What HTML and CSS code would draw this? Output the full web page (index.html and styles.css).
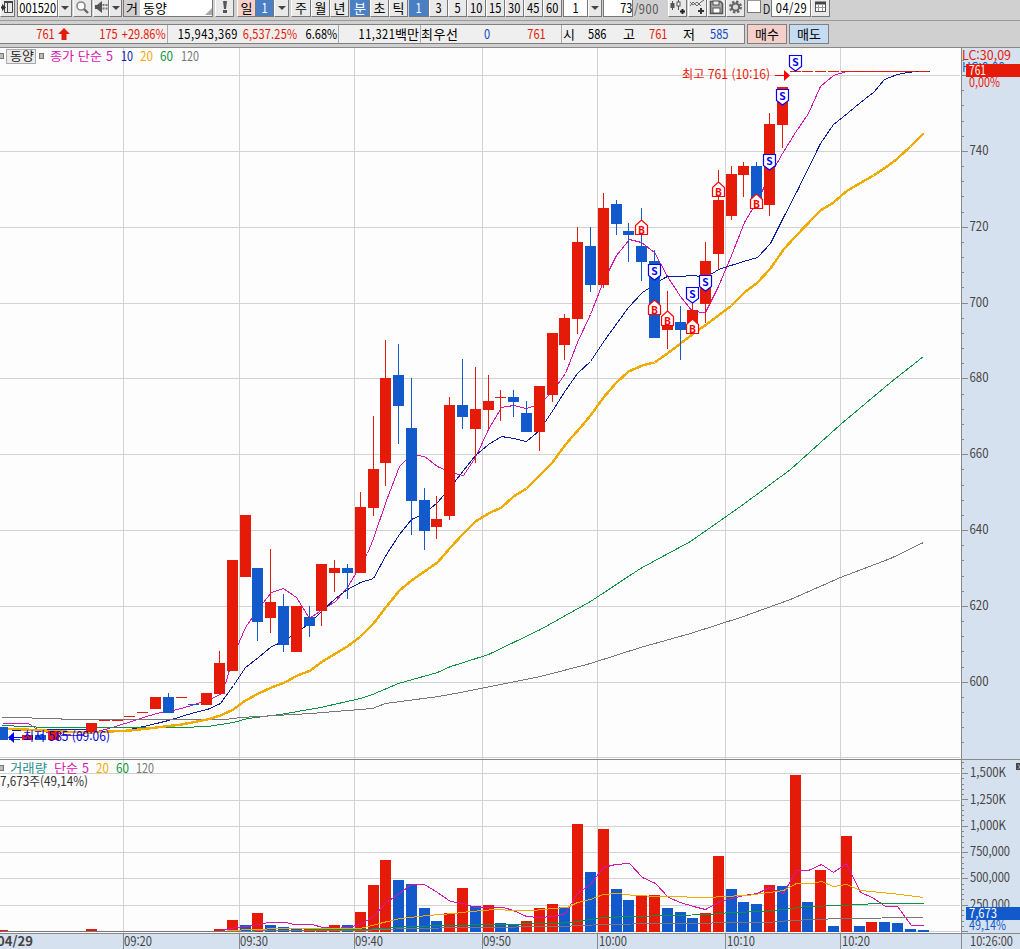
FILE: index.html
```html
<!DOCTYPE html>
<html lang="ko">
<head>
<meta charset="utf-8">
<title>동양 001520</title>
<link rel="stylesheet" href="styles.css">
</head>
<body>
<div class="app">
  <div class="toolbar">
    <div class="c btn w15"><svg width="13" height="16"><path d="M3.500 3v9.500h8v-11h-8M6.500 3v9" fill="none" stroke="#444"/><path d="M3 2h9" stroke="#444" stroke-width="2"/><path d="M-1 7.500h4" stroke="#333" stroke-width="2"/><path d="M1 4l4 3.500-4 3.500z" fill="#333"/></svg></div>
    <div class="c inp w41 m2"><b class="n">001520</b></div>
    <div class="c btn w14"><i class="dd"></i></div>
    <div class="c btn w19 m1"><svg width="17" height="16"><circle cx="7" cy="6" r="4" fill="#fff" stroke="#888" stroke-width="1.600"/><path d="M10 9l4 4" stroke="#666" stroke-width="2.400"/></svg></div>
    <div class="c btn w16 m1"><svg width="14" height="16"><path d="M1 5h2l5-4v12l-5-4h-2z" fill="#555"/><path d="M9.500 4v7M12.500 4v7" stroke="#777" stroke-width="2" stroke-dasharray="2 1.500"/></svg></div>
    <div class="c btn w13"><i class="dd"></i></div>
    <div class="c inp w90 m1 left"><span class="k tag">거</span><span class="k">동양</span><i class="corner"></i></div>
    <div class="c btn w19 m2"><svg width="17" height="16"><path d="M7 1h4l-1 8h-2z" fill="#555"/><rect x="7" y="10" width="4" height="3" fill="#555"/></svg></div>
    <div class="c btn pink w19 m3"><span class="k">일</span></div>
    <div class="c btn on w18"><b class="n">1</b></div>
    <div class="c btn w15"><i class="dd"></i></div>
    <div class="c btn w20 m2"><span class="k">주</span></div>
    <div class="c btn w19"><span class="k">월</span></div>
    <div class="c btn w19"><span class="k">년</span></div>
    <div class="c btn on w20 m1"><span class="k">분</span></div>
    <div class="c btn w19"><span class="k">초</span></div>
    <div class="c btn w19"><span class="k">틱</span></div>
    <div class="c btn on w20 m1"><b class="n">1</b></div>
    <div class="c btn w19"><b class="n">3</b></div>
    <div class="c btn w19"><b class="n">5</b></div>
    <div class="c btn w19"><b class="n">10</b></div>
    <div class="c btn w19"><b class="n">15</b></div>
    <div class="c btn w19"><b class="n">30</b></div>
    <div class="c btn w19"><b class="n">45</b></div>
    <div class="c btn w19"><b class="n">60</b></div>
    <div class="c inp w25 m1"><b class="n">1</b></div>
    <div class="c btn w14"><i class="dd"></i></div>
    <div class="c inp w30 m1 right"><b class="n">73</b></div>
    <div class="c flat w25 m1 left"><b class="n t">/900</b></div>
    <div class="c btn w19 m9"><svg width="17" height="16"><path d="M3.500 1v9M9.500 0v10" stroke="#555"/><rect x="1.500" y="3" width="4" height="5" fill="#555"/><rect x="8" y="2" width="3" height="4" fill="#fff" stroke="#555"/><path d="M13.500 9v5M11 11.500h5" stroke="#222" stroke-width="2"/></svg></div>
    <div class="c btn w19 m1"><svg width="17" height="16"><path d="M1 6l3-4 4 4 4-4 3-2M1 2l3 3 4-3 4 4" fill="none" stroke="#666"/><path d="M12 8v6M9 11h6" stroke="#333" stroke-width="2"/></svg></div>
    <div class="c btn w19"><svg width="17" height="16"><path d="M2.500 1.500h10l2 2v10h-12z" fill="#aaa" stroke="#555" stroke-width="1.500"/><rect x="5" y="1" width="6" height="4" fill="#eee" stroke="#555"/><rect x="5" y="8" width="7" height="5" fill="#fff" stroke="#555"/></svg></div>
    <div class="c btn w19"><svg width="17" height="16"><circle cx="8.500" cy="7" r="5.200" fill="none" stroke="#666" stroke-width="2.600" stroke-dasharray="2.300 1.780"/><circle cx="8.500" cy="7" r="3.600" fill="#ddd" stroke="#666" stroke-width="2"/></svg></div>
    <div class="c check m2"></div>
    <div class="c flat w9 m1"><b class="n dark">D</b></div>
    <div class="c inp w40"><b class="n t">04/29</b></div>
    <div class="c btn w19"><svg width="17" height="16"><rect x="3.500" y="2.500" width="10" height="9" fill="#fff" stroke="#555"/><path d="M3 3h11" stroke="#444" stroke-width="3"/><path d="M4 7.500h9M6.500 5v6M10.500 5v6" stroke="#999"/></svg></div>
  </div>
  <div class="quote">
    <div class="panel">
      <div class="q red w55 right"><b class="n">761</b></div>
      <div class="q w17"><svg width="12" height="12"><path d="M6 0l6 6h-3.500v6h-5v-6h-3.500z" fill="#e61a08"/></svg></div>
      <div class="q red w46 right"><b class="n">175</b></div>
      <div class="q red w50 right sep"><b class="n">+29.86%</b></div>
      <div class="q w70 right"><b class="n t">15,943,369</b></div>
      <div class="q red w59 right"><b class="n t2">6,537.25%</b></div>
      <div class="q w42 right sep"><b class="n">6.68%</b></div>
      <div class="q w82 right sep"><b class="n t">11,321</b><span class="k">백만</span></div>
      <div class="q w40 left"><span class="k wide">최우선</span></div>
      <div class="q blue w29 right"><b class="n">0</b></div>
      <div class="q red w71 right padr"><b class="n">761</b></div>
      <div class="q w27 left sepl"><span class="k">시</span></div>
      <div class="q w35 left"><b class="n">586</b></div>
      <div class="q w26 left"><span class="k">고</span></div>
      <div class="q red w34 left"><b class="n">761</b></div>
      <div class="q w27 left"><span class="k">저</span></div>
      <div class="q blue w34 left"><b class="n">585</b></div>
    </div>
    <div class="act buy"><span class="k">매수</span></div>
    <div class="act sell"><span class="k">매도</span></div>
  </div>
  <svg id="chart" class="chart" width="1020" height="902" viewBox="0 47 1020 902"></svg>
</div>
<script src="chart.js"></script>
</body>
</html>
```
FILE: styles.css
```css
* { box-sizing: border-box; }
body { margin: 0; background: #d0d0d0; font-family: "Noto Sans CJK KR", sans-serif; overflow: hidden; }
.app { width: 1020px; height: 949px; display: flex; flex-direction: column; overflow: hidden; }
.toolbar { display: flex; height: 21px; flex: none; border-bottom: 1px solid #999; }
.c { height: 17px; flex: none; display: flex; align-items: center; justify-content: center; border-right: 1px solid #777; border-bottom: 1px solid #777; font-size: 13px; color: #000; line-height: 15px; padding-bottom: 1px; }
.c svg { display: block; flex: none; }
.btn { background: #e9e9e9; border-left: 1px solid #fff; }
.inp { background: #fff; border-left: 1px solid #777; }
.flat { border: 0; color: #555; }
.pink { background: #f6d0cb; }
.on { background: #4a7fc4; border-left-color: #4a7fc4; color: #fff; }
.check { width: 14px; height: 13px; background: #fff; border: 1px solid #777; border-top-color: #999; }
.n { font-weight: 400; display: inline-block; white-space: nowrap; transform: scaleX(.85); flex: none; }
.t { letter-spacing: .6px; }
.t2 { letter-spacing: .2px; }
.dark { color: #222; }
.k { white-space: nowrap; flex: none; }
.wide { letter-spacing: .5px; }
.left { justify-content: flex-start; }
.left .n { transform-origin: left; }
.right { justify-content: flex-end; }
.right .n { transform-origin: right; }
.tag { background: #d0d0d0; width: 16px; text-align: center; margin-right: 3px; height: 16px; }
.corner { margin-left: auto; align-self: flex-end; border-left: 7px solid transparent; border-bottom: 7px solid #aaa; }
.dd { border: 4px solid transparent; border-top: 4px solid #444; border-bottom: 0; }
.m1 { margin-left: 1px; } .m2 { margin-left: 2px; } .m3 { margin-left: 3px; } .m9 { margin-left: 9px; }
.w9 { width: 9px; } .w13 { width: 13px; } .w14 { width: 14px; } .w15 { width: 15px; } .w16 { width: 16px; }
.w17 { width: 17px; } .w18 { width: 18px; } .w19 { width: 19px; } .w20 { width: 20px; } .w25 { width: 25px; }
.w26 { width: 26px; } .w27 { width: 27px; } .w29 { width: 29px; } .w30 { width: 30px; } .w34 { width: 34px; } .w35 { width: 35px; }
.w40 { width: 40px; } .w41 { width: 41px; } .w42 { width: 42px; } .w46 { width: 46px; } .w50 { width: 50px; }
.w55 { width: 55px; } .w59 { width: 59px; } .w70 { width: 70px; } .w71 { width: 71px; } .w82 { width: 82px; } .w90 { width: 90px; }
.quote { display: flex; height: 26px; flex: none; padding-top: 3px; gap: 2px; }
.panel { display: flex; width: 745px; height: 20px; background: #efefef; border: 1px solid #808080; border-left: 0; }
.q { display: flex; flex: none; align-items: center; font-size: 13px; line-height: 18px; justify-content: center; color: #000; }
.q.left { justify-content: flex-start; }
.q.right { justify-content: flex-end; }
.sep { border-right: 1px solid #aaa; padding-right: 1px; }
.sepl { border-left: 1px solid #aaa; padding-left: 1px; }
.q.padr { padding-right: 15px; }
.red { color: #e61a08; }
.blue { color: #1147c0; }
.act { width: 40px; height: 20px; border: 1px solid #808080; font-size: 13px; line-height: 17px; text-align: center; }
.buy { background: #f5d0cb; }
.sell { background: #c5dcf2; }
.chart { display: block; flex: none; font-family: "Noto Sans CJK KR", sans-serif; font-size: 12.5px; }
.crisp { shape-rendering: crispEdges; }
.mark { font-family: "DejaVu Sans Mono", monospace; font-size: 11px; font-weight: 700; text-anchor: middle; }
```
FILE: chart.js
```javascript
const RED = '#e61a08', BLUE = '#125acb', MAG = '#d614b0', NAVY = '#0a1e9e',
      GOLD = '#f0ab00', GREEN = '#0c9440', GRAY = '#777';
const out = [];
const left = k => Math.floor(227.3 + 12.792 * k);
const rect = (x, y, w, h, f) => out.push(`<rect x="${x}" y="${y}" width="${w}" height="${h}" fill="${f}"/>`);
const line = (pts, c, w = 1) => out.push(`<polyline points="${pts}" transform="translate(.5 .5)" fill="none" stroke="${c}" stroke-width="${w}"/>`);
const text = (x, y, s, c, len, extra = '') => out.push(`<text x="${x}" y="${y}" fill="${c}" ${len ? `textLength="${len}" lengthAdjust="spacingAndGlyphs"` : ''} ${extra}>${s}</text>`);

out.push('<g class="crisp">');
rect(0, 47, 1020, 902, '#fdfdfd');
rect(961, 47, 59, 902, '#d6e1ef');
rect(0, 934, 1020, 15, '#d6e1ef');
for (const y of [75, 151, 227, 303, 378, 454, 530, 606, 682, 757, 773, 800, 826, 852, 878, 905, 931]) rect(0, y, 960, 1, '#d2d2d2');
for (const x of [123, 239, 354, 482, 597, 725, 840]) {
  rect(x, 48, 1, 885, '#d2d2d2');
  rect(x, 934, 1, 15, '#888');
}

// moving averages of the closing price
line('2,723 28,723 37,729 47,732 75,735 92,732 105,729 118,725 131,721 143,717 156,713 168,711 181,708 194,704 207,700 220,694 226,680 233,655 245,627 258,608 271,592 283,588 296,597 309,618 322,609 335,601 347,587 360,565 367,553 373,538 386,500 399,466 411,454 424,456 437,466 450,472 463,475 475,457 488,429 501,407 513,405 526,408 539,404 552,391 565,373 577,342 590,314 603,281 616,255 629,239 641,242 654,252 667,276 680,296 692,311 705,312 718,286 731,255 744,222 757,200 769,176 782,153 795,132 808,113 820,86 833,75 846,71 929,71', MAG);
line('2,729 20,730 48,729 85,729 95,731 120,731 143,726 156,723 168,720 181,716 194,712 207,709 220,703 233,685 245,667 258,657 271,646 283,641 296,632 309,623 322,610 335,598 347,589 360,582 373,578 386,554 399,534 411,519 424,513 437,502 450,487 463,470 475,455 488,444 501,436 513,438 526,441 539,430 553,409 565,390 577,373 590,361 604,340 628,307 642,292 648,288 663,278 667,276 680,276 692,275 700,276 712,273 718,269 743,261 757,257 770,243 783,217 797,190 820,143 833,124 842,117 860,102 873,92 884,79 897,74 907,72 917,71 929,71', NAVY);
line('2,725 47,727 180,727 207,726 220,724 233,722 247,718 280,714 320,707 360,698 372,694 398,683 437,672 450,666 460,663 488,654 540,629 590,601 640,568 690,541 740,506 790,469 840,424 890,382 923,356', GREEN);
line('2,717 60,718 62,719 225,719 240,717 310,713 372,708 385,703 438,696 460,692 540,676 590,663 640,647 690,633 740,617 790,599 840,577 890,558 923,542', GRAY);
line('0,728 25,729 60,731 90,732 110,731 130,730 156,727 181,724 207,719 220,715 233,709 245,700 258,693 271,687 284,682 297,675 310,670 322,661 335,653 347,646 360,636 373,623 386,606 399,590 411,580 424,571 437,562 450,547 463,533 475,521 488,513 501,507 513,496 526,488 539,475 552,462 565,444 580,427 590,415 603,397 616,382 628,371 642,365 654,362 667,353 680,343 693,333 706,324 718,315 731,305 744,292 757,282 770,268 783,249 795,236 815,215 820,210 833,202 847,190 873,175 888,165 897,158 910,146 923,133', GOLD, 2.4);

// candles: slot, up/down, high, body top, body bottom, low
const candles = [
[-18,0,727,727,740,740],[-17,0,739,739,740,740],[-16,1,735,735,740,740],[-15,0,735,735,740,740],[-14,1,731,731,740,740],
[-13,0,735,735,736,736],[-12,0,735,735,736,736],[-11,1,723,723,732,732],[-10,1,720,720,721,721],[-9,1,720,720,721,721],
[-8,1,716,716,717,717],[-7,1,712,712,713,713],[-6,1,697,697,709,709],[-5,0,693,697,713,713],[-4,1,697,697,698,698],
[-3,0,704,704,705,705],[-2,1,693,693,705,705],[-1,1,651,663,694,694],[0,1,560,560,671,671],[1,1,515,515,577,577],
[2,0,568,568,622,641],[3,1,549,602,618,633],[4,0,594,606,645,652],[5,1,606,606,652,652],[6,0,606,617,626,637],
[7,1,564,564,611,626],[8,1,560,568,573,592],[9,0,564,568,573,599],[10,1,492,507,573,573],[11,1,416,469,508,516],
[12,1,340,378,463,486],[13,0,344,375,406,444],[14,0,378,428,501,535],[15,0,488,500,531,550],[16,1,496,519,527,539],
[17,1,397,405,516,520],[18,0,359,405,417,429],[19,1,367,409,429,463],[20,1,375,401,410,429],[21,1,390,397,398,421],
[22,0,390,397,402,417],[23,0,401,413,432,432],[24,1,386,386,432,451],[25,1,333,333,395,402],[26,1,314,318,345,360],
[27,1,227,242,319,334],[28,0,227,246,285,292],[29,1,193,208,285,288],[30,0,200,204,224,235],[31,0,223,231,235,262],
[32,0,208,246,262,281],[33,0,250,261,338,338],[34,1,291,322,330,349],[35,0,306,322,330,360],[36,1,303,310,326,326],
[37,1,242,261,304,323],[38,1,170,200,254,269],[39,1,166,174,216,220],[40,1,162,166,175,197],[41,0,162,166,200,200],
[42,1,113,124,205,216],[43,1,87,87,125,148]];
for (const [k, up, h, t, b, l] of candles) {
  const x = left(k), c = up ? RED : BLUE;
  rect(x, t, 11, b - t, c);
  rect(x + 5, h, 1, l - h, c);
}
for (let k = 44; k <= 54; k++) rect(left(k), 71, 11, 1, RED);

// volume bars: top edge per slot, then up/down
const vol = [[-18,930,1],[-11,929,1],[-1,929,1],[0,920,1],[1,925,0],[2,913,1],[3,925,0],[4,927,0],[5,929,0],[6,929,1],[7,928,1],[8,925,1],
[9,925,0],[10,912,1],[11,885,1],[12,860,1],[13,880,0],[14,884,0],[15,908,0],[16,921,0],[17,913,1],[18,888,1],[19,906,0],[20,905,1],
[21,923,0],[22,925,0],[23,921,1],[24,908,1],[25,904,1],[26,907,0],[27,824,1],[28,872,0],[29,829,1],[30,889,0],[31,900,0],[32,896,1],
[33,895,1],[34,908,0],[35,912,0],[36,918,0],[37,913,1],[38,856,1],[39,889,0],[40,902,0],[41,904,0],[42,885,1],[43,886,0],[44,775,1],
[45,902,0],[46,870,1],[47,926,0],[48,836,1],[49,926,0],[50,922,1],[51,922,0],[52,923,0],[53,929,0],[54,930,0]];
for (const [k, t, up] of vol) rect(left(k), t, 11, 932 - t, up ? RED : BLUE);
line('222,930 230,928 245,926 258,924 268,922 286,922 293,924 312,924 322,927 335,928 347,927 360,924 373,916 386,902 399,893 411,884 424,884 437,892 450,901 463,903 475,907 503,907 513,910 526,916 539,917 553,916 565,913 577,893 590,884 603,867 615,864 629,863 642,877 655,883 668,897 680,902 693,906 705,909 720,901 743,895 757,893 769,887 783,893 796,870 808,870 821,864 833,872 846,863 860,892 872,897 885,906 897,906 911,925 923,925', MAG);
line('227,930 280,928 360,928 383,922 400,918 427,915 453,913 470,911 495,909 513,910 533,910 553,908 567,907 577,902 590,899 603,894 617,893 633,895 660,896 712,897 720,896 747,895 783,890 796,883 812,883 821,881 833,886 846,884 860,890 880,892 900,894 923,897', GOLD);
line('252,930 360,929 383,928 410,926 450,925 490,924 553,923 570,922 603,917 630,916 673,915 710,914 730,912 763,911 783,909 807,906 840,905 877,903 923,903', GREEN);
line('0,931 230,931 280,930 360,930 407,928 473,927 560,926 603,924 660,923 697,923 727,922 767,922 790,920 840,918 923,917', GRAY);

// frame and axis ticks
rect(0, 47, 1020, 1, '#888');
rect(0, 759, 1020, 1, '#888');
rect(0, 933, 1020, 1, '#888');
rect(961, 47, 1, 902, '#888');
for (let i = -1; i < 46; i++) {
  const y = Math.round(75 + i * 15.17);
  if (y < 758) rect(962, y, (i + 5) % 5 === 0 ? 6 : 2, 1, '#888');
}
for (let i = -2; i <= 30; i++) rect(962, Math.round(773 + i * 5.27), i % 5 === 0 ? 6 : 2, 1, '#888');
out.push('</g>');

[740, 720, 700, 680, 660, 640, 620, 600].forEach((v, i) => text(969.5, [155, 231, 307, 382, 458, 534, 610, 686][i], v, '#444', 19));
[['1,500K', 777, 36], ['1,250K', 804, 36], ['1,000K', 830, 36], ['750,000', 856, 40], ['500,000', 882, 40], ['250,000', 909, 40]]
  .forEach(([s, y, w]) => text(970, y, s, '#444', w));
text(962, 60, 'LC:30,09', RED, 49);
text(962, 72, 'HC:0,00', BLUE, 43);
rect(966, 64, 54, 13, RED);
text(969, 75, '761', '#fff', 17);
text(969, 87, '0,00%', RED, 31);
rect(966, 907, 54, 13, BLUE);
text(969, 918, '7,673', '#fff', 28);
text(969, 930, '49,14%', BLUE, 37);
rect(1016, 763, 4, 7, '#444');
text(1016.5, 769, '×', '#fff', 0, 'font-size="7"');

text(-3, 945.5, '04/29', '#444', 36, 'font-weight="700"');
[[124, '09:20'], [240, '09:30'], [355, '09:40'], [483, '09:50'], [599, '10:00'], [727, '10:10'], [842, '10:20']]
  .forEach(([x, s]) => text(x, 945.5, s, '#444', 28));
text(970, 945.5, '10:26:00', '#444', 43);

// legends
const box = y => out.push(`<rect x="-1.5" y="${y}" width="5" height="5" fill="#bbb" stroke="#777"/>`);
box(53.5); box(765.5);
out.push('<rect x="6.5" y="49.5" width="29" height="14" fill="#ececec" stroke="#aaa"/><rect x="39.5" y="53.5" width="4" height="5" fill="#bbb" stroke="#777"/>');
text(10, 61, '동양', '#222', 24);
text(50, 61, '종가 단순', MAG, 52);
text(106, 61, '5', MAG, 7);
text(121, 61, '10', NAVY, 12);
text(140, 61, '20', GOLD, 13);
text(160, 61, '60', GREEN, 13);
text(181, 61, '120', GRAY, 18);
text(10, 773, '거래량', '#2a9090', 37);
text(54, 773, '단순', MAG, 24);
text(82, 773, '5', MAG, 7);
text(96, 773, '20', GOLD, 13);
text(116, 773, '60', GREEN, 13);
text(136, 773, '120', GRAY, 18);
text(0, 786, '7,673주(49,14%)', '#333', 88);
text(682, 79, '최고 761 (10:16)', RED, 88);
out.push('<path d="M775 75.5h10" stroke="#f00"/><path d="M784 70l6 5.500-6 5.500z" fill="#f00"/>');
text(23, 741, '최저 585 (09:06)', '#00d', 87);
out.push('<path d="M13 737.5h9" stroke="#00f"/><path d="M14 732v11l-6-5.500z" fill="#00f"/>');

// trade markers: x centre and top of the pentagon
const sell = [[795,55],[782,89],[769,154],[654,264],[692,287],[705,275]];
const buy = [[641,220],[718,182],[756,194],[654,300],[667,311],[692,319]];
for (const [x, y] of sell) {
  out.push(`<path d="M${x - 5.5} ${y + .5}h12v11l-6 4.500-6-4.500z" fill="#fff" stroke="#00e" stroke-width="1.200"/>`);
  text(x + .5, y + 10.5, 'S', '#00e', 0, 'class="mark"');
}
for (const [x, y] of buy) {
  out.push(`<path d="M${x - 5.5} ${y + 14.5}h12v-9l-6-5.500-6 5.500z" fill="#fff" stroke="#f00" stroke-width="1.200"/>`);
  text(x + .5, y + 13.5, 'B', '#f00', 0, 'class="mark"');
}
document.getElementById('chart').innerHTML = out.join('');
```
